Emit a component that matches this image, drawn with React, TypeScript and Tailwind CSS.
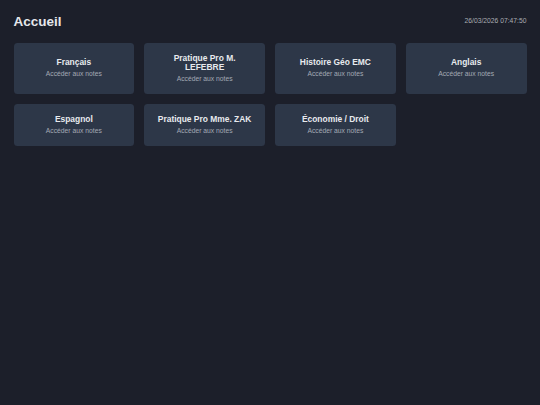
import React from "react";

const subjects = [
  "Français",
  "Pratique Pro M. LEFEBRE",
  "Histoire Géo EMC",
  "Anglais",
  "Espagnol",
  "Pratique Pro Mme. ZAK",
  "Économie / Droit",
];

export default function App() {
  return (
    <div
      className="min-h-[405px] w-full bg-[#1c1f2a] p-[13.5px] text-[#e5e7eb]"
      style={{ fontFamily: '"Liberation Sans", Arial, sans-serif' }}
    >
      <header className="mb-[13.5px] flex items-center justify-between">
        <h1 className="text-[13.5px] font-bold leading-[1.15]">Accueil</h1>
        <span className="text-[6.75px] leading-[1.15] text-[#aaadb3]">26/03/2026 07:47:50</span>
      </header>
      <div className="grid grid-cols-4 gap-[10.125px]">
        {subjects.map((name) => (
          <a
            key={name}
            className="flex flex-col items-center justify-center rounded-[3.5px] bg-[#2d3748] px-[11.25px] pt-[11px] pb-[11.25px] text-center"
          >
            <div className="text-[8.44px] font-bold leading-[1.1] text-[#e8eaee]">{name}</div>
            <div className="mt-[2.75px] text-[6.75px] leading-[1.15] text-[#a3a9b4]">Accéder aux notes</div>
          </a>
        ))}
      </div>
    </div>
  );
}
